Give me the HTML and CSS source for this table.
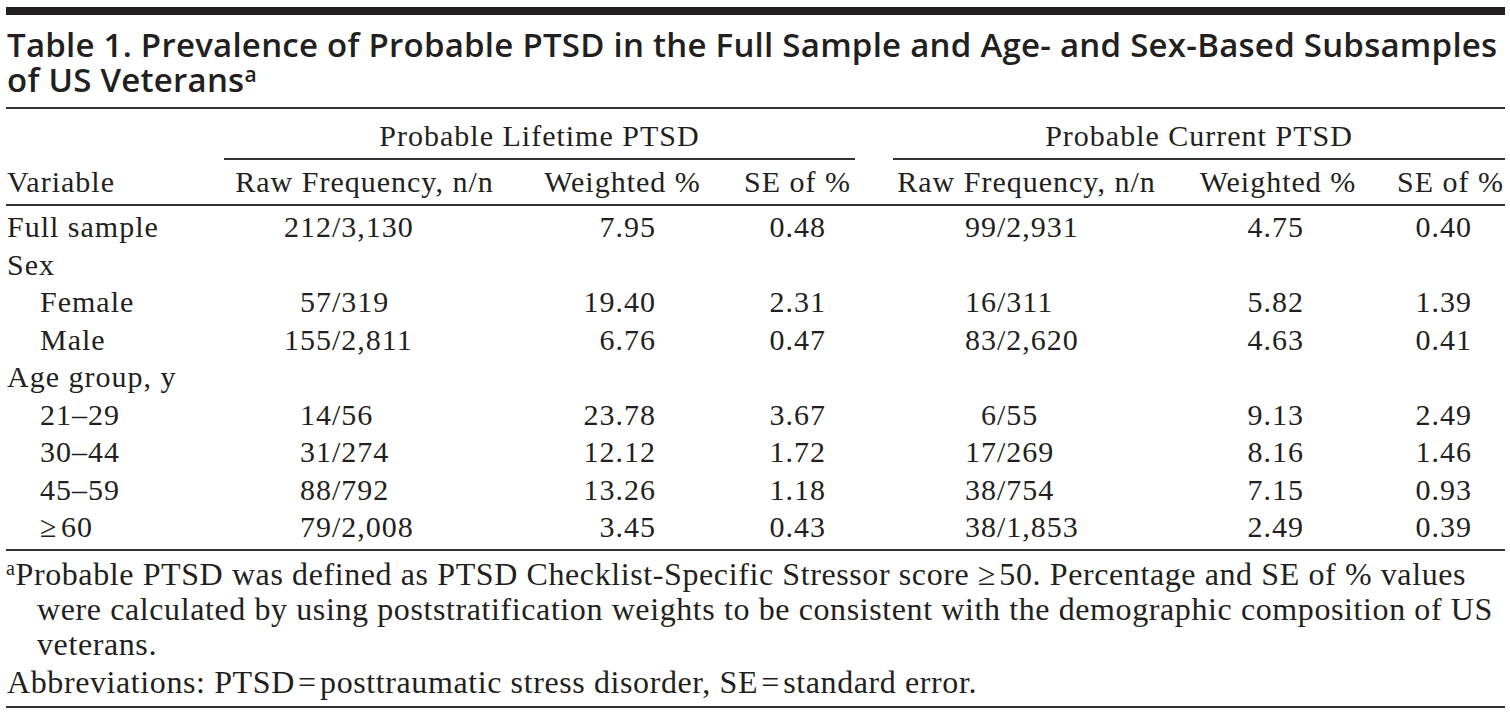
FILE: index.html
```html
<!DOCTYPE html>
<html lang="en">
<head>
<meta charset="utf-8">
<title>Table 1</title>
<link rel="stylesheet" href="styles.css">
</head>
<body>
<div class="page">
  <div class="topbar"></div>
  <h1 class="title">Table 1. Prevalence of Probable PTSD in the Full Sample and Age- and Sex-Based Subsamples of US Veterans<sup>a</sup></h1>
  <table class="data">
    <colgroup>
      <col class="c-var">
      <col class="c-raw1">
      <col class="c-w1">
      <col class="c-se1">
      <col class="c-gap">
      <col class="c-raw2">
      <col class="c-w2">
      <col class="c-se2">
    </colgroup>
    <thead>
      <tr class="group-row">
        <th></th>
        <th colspan="3" class="group">Probable Lifetime PTSD</th>
        <th></th>
        <th colspan="3" class="group">Probable Current PTSD</th>
      </tr>
      <tr class="head-row">
        <th class="var">Variable</th>
        <th>Raw Frequency, n/n</th>
        <th>Weighted %</th>
        <th>SE of %</th>
        <th></th>
        <th>Raw Frequency, n/n</th>
        <th>Weighted %</th>
        <th>SE of %</th>
      </tr>
    </thead>
    <tbody>
      <tr class="first">
        <td class="var">Full sample</td>
        <td class="raw1"><span class="num">212</span>/3,130</td>
        <td class="w1">7.95</td>
        <td class="se1">0.48</td>
        <td></td>
        <td class="raw2"><span class="num">99</span>/2,931</td>
        <td class="w2">4.75</td>
        <td class="se2">0.40</td>
      </tr>
      <tr>
        <td class="var">Sex</td>
        <td></td><td></td><td></td><td></td><td></td><td></td><td></td>
      </tr>
      <tr>
        <td class="var sub">Female</td>
        <td class="raw1"><span class="num">57</span>/319</td>
        <td class="w1">19.40</td>
        <td class="se1">2.31</td>
        <td></td>
        <td class="raw2"><span class="num">16</span>/311</td>
        <td class="w2">5.82</td>
        <td class="se2">1.39</td>
      </tr>
      <tr>
        <td class="var sub">Male</td>
        <td class="raw1"><span class="num">155</span>/2,811</td>
        <td class="w1">6.76</td>
        <td class="se1">0.47</td>
        <td></td>
        <td class="raw2"><span class="num">83</span>/2,620</td>
        <td class="w2">4.63</td>
        <td class="se2">0.41</td>
      </tr>
      <tr>
        <td class="var">Age group, y</td>
        <td></td><td></td><td></td><td></td><td></td><td></td><td></td>
      </tr>
      <tr>
        <td class="var sub">21–29</td>
        <td class="raw1"><span class="num">14</span>/56</td>
        <td class="w1">23.78</td>
        <td class="se1">3.67</td>
        <td></td>
        <td class="raw2"><span class="num">6</span>/55</td>
        <td class="w2">9.13</td>
        <td class="se2">2.49</td>
      </tr>
      <tr>
        <td class="var sub">30–44</td>
        <td class="raw1"><span class="num">31</span>/274</td>
        <td class="w1">12.12</td>
        <td class="se1">1.72</td>
        <td></td>
        <td class="raw2"><span class="num">17</span>/269</td>
        <td class="w2">8.16</td>
        <td class="se2">1.46</td>
      </tr>
      <tr>
        <td class="var sub">45–59</td>
        <td class="raw1"><span class="num">88</span>/792</td>
        <td class="w1">13.26</td>
        <td class="se1">1.18</td>
        <td></td>
        <td class="raw2"><span class="num">38</span>/754</td>
        <td class="w2">7.15</td>
        <td class="se2">0.93</td>
      </tr>
      <tr class="last">
        <td class="var sub">≥&#8202;60</td>
        <td class="raw1"><span class="num">79</span>/2,008</td>
        <td class="w1">3.45</td>
        <td class="se1">0.43</td>
        <td></td>
        <td class="raw2"><span class="num">38</span>/1,853</td>
        <td class="w2">2.49</td>
        <td class="se2">0.39</td>
      </tr>
    </tbody>
  </table>
  <div class="notes">
    <p class="note hang"><sup>a</sup>Probable PTSD was defined as PTSD Checklist-Specific Stressor score ≥&#8202;50. Percentage and SE of % values were calculated by using poststratification weights to be consistent with the demographic composition of US veterans.</p>
    <p class="note abbr">Abbreviations: PTSD&#8202;=&#8202;posttraumatic stress disorder, SE&#8202;=&#8202;standard error.</p>
  </div>
</div>
</body>
</html>
```

FILE: styles.css
```css
html, body {
  margin: 0;
  padding: 0;
  background: #ffffff;
}

body {
  color: #231f20;
  font-family: "Liberation Serif", "Times New Roman", serif;
}

.page {
  width: 1499px;
  padding: 7px 0 0 6px;
}

.topbar {
  height: 8px;
  background: #231f20;
}

.title {
  margin: 0;
  padding: 12px 0 10px 1px;
  font-family: "Open Sans", "Noto Sans", sans-serif;
  font-weight: 600;
  font-size: 33px;
  line-height: 35px;
  letter-spacing: 0.25px;
  border-bottom: 2px solid #333333;
}

.title sup {
  font-size: 21px;
  line-height: 0;
  vertical-align: 10px;
}

.data {
  width: 1499px;
  table-layout: fixed;
  border-collapse: collapse;
  font-size: 30px;
  letter-spacing: 1px;
}

.c-var { width: 218px; }
.c-raw1 { width: 281px; }
.c-w1 { width: 235px; }
.c-se1 { width: 115px; }
.c-gap { width: 38px; }
.c-raw2 { width: 267px; }
.c-w2 { width: 236px; }
.c-se2 { width: 109px; }

.data th {
  font-weight: normal;
  text-align: center;
  padding: 0;
  line-height: 35px;
  white-space: nowrap;
}

.group-row th {
  padding: 9px 0 5px;
}

.group-row th.group {
  border-bottom: 2px solid #333333;
}

.head-row th {
  padding: 4px 0 5px;
  border-bottom: 2px solid #333333;
}

.data th.var {
  text-align: left;
  padding-left: 1px;
}

.data td {
  padding: 0;
  height: 37.5px;
  line-height: 37.5px;
  white-space: nowrap;
}

.data tr.first td {
  padding-top: 2px;
}

.data tr.last td {
  padding-bottom: 3px;
  border-bottom: 2px solid #333333;
}

.data td.var {
  padding-left: 1px;
}

.data td.sub {
  padding-left: 34px;
}

.num {
  display: inline-block;
  text-align: right;
}

.raw1 .num { width: 108px; }
.raw2 .num { width: 104px; }

.w1, .se1, .w2, .se2 {
  text-align: right;
}

.data td.w1 { padding-right: 84px; }
.data td.se1 { padding-right: 29px; }
.data td.w2 { padding-right: 92px; }
.data td.se2 { padding-right: 33px; }

.notes {
  padding: 6px 0 6px;
  border-bottom: 2px solid #333333;
}

.note {
  margin: 0;
  font-size: 32px;
  line-height: 35px;
  letter-spacing: 0.6px;
}

.hang {
  padding-left: 31px;
  text-indent: -31px;
}

.abbr {
  margin-top: 3px;
  padding-left: 1px;
}

.note sup {
  font-size: 20px;
  line-height: 0;
  vertical-align: 10px;
}
```
